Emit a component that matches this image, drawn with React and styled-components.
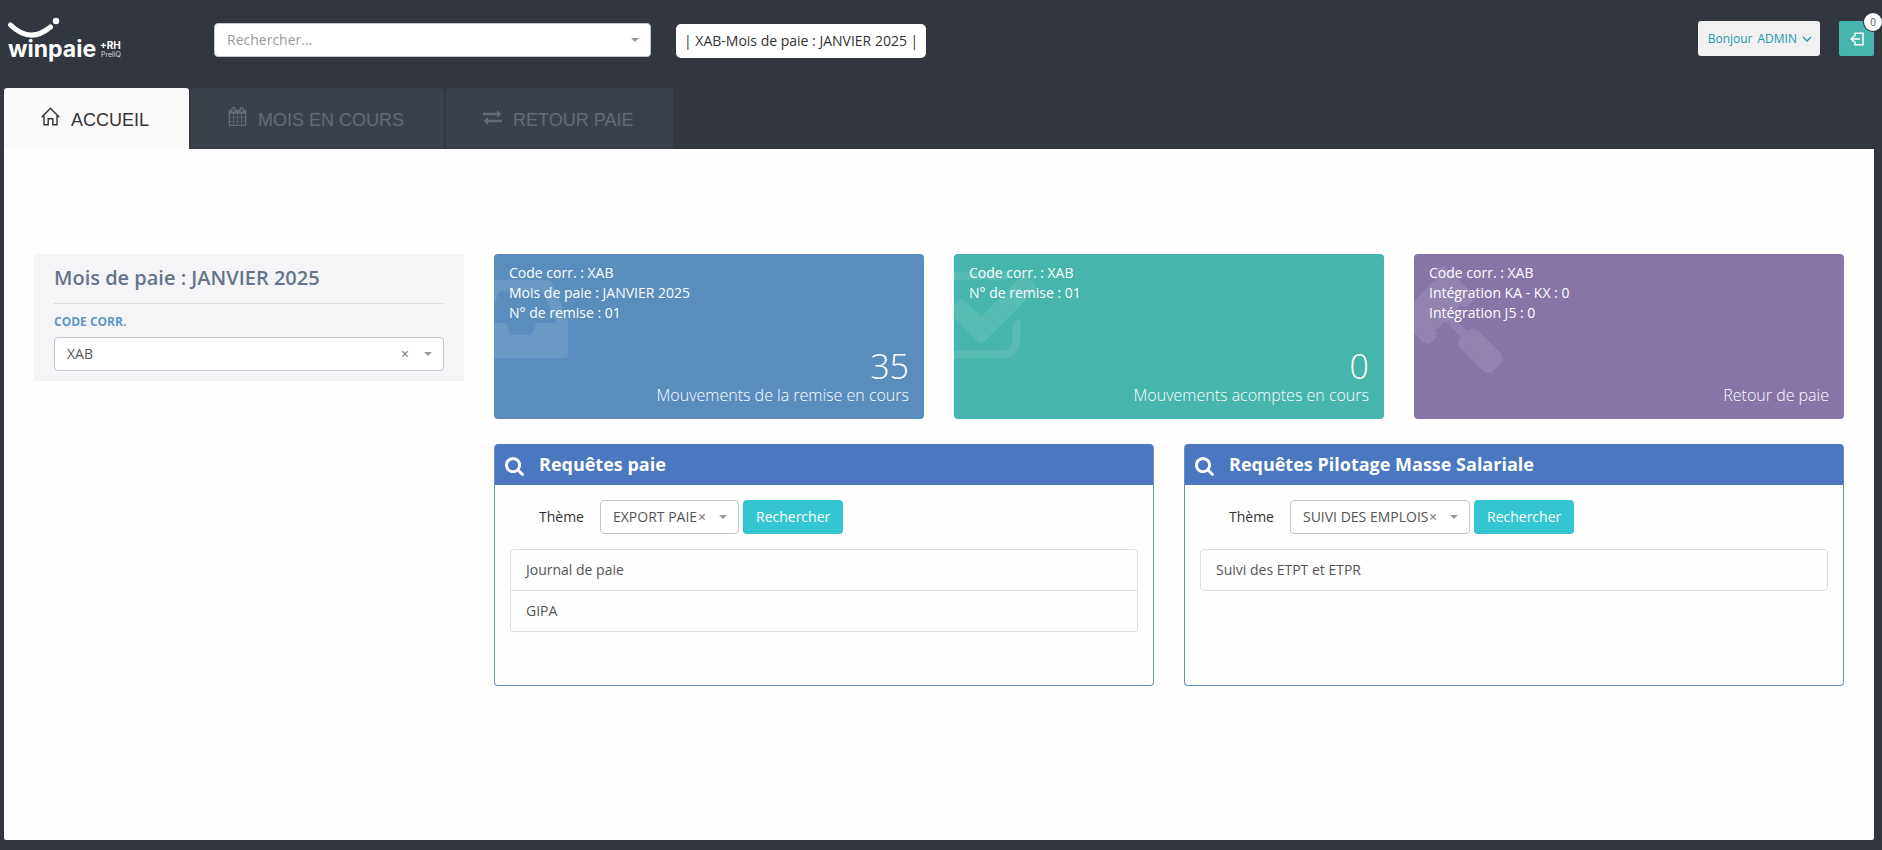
import React from 'react';
import styled, { createGlobalStyle } from 'styled-components';

const colors = {
  dark: '#32363f',
  tab: '#3b414b',
  tabText: '#656a73',
  panel: '#fefefe',
  side: '#f5f5f8',
  border: '#c2c5ce',
  line: '#dddde0',
  blue: '#5a8dbd',
  green: '#45b5ad',
  purple: '#8775a8',
  steel: '#4a77bf',
  cyan: '#33c6d0',
  text: '#333333',
  grey: '#555555',
};

const GlobalStyle = createGlobalStyle`
  * {
    box-sizing: border-box;
  }

  body {
    margin: 0;
    background: ${colors.dark};
    color: ${colors.text};
    font-family: 'Open Sans', sans-serif;
    font-size: 14px;
    line-height: 20px;
  }

  button,
  select {
    font: inherit;
  }
`;

const Page = styled.div`
  min-height: 100vh;
  display: flex;
  flex-direction: column;
  padding: 0 8px 10px 4px;
`;

const Header = styled.header`
  height: 88px;
  display: flex;
  align-items: flex-start;
  padding-top: 21px;
`;

const LogoLink = styled.a`
  flex: none;
  width: 210px;
  margin-top: -5px;
  padding-left: 3px;

  svg {
    display: block;
  }
`;

const SelectBox = styled.div`
  position: relative;
  flex: none;
  width: ${({ $width }) => $width || 'auto'};
  height: 34px;

  select {
    width: 100%;
    height: 34px;
    padding: 0 ${({ $compact }) => ($compact ? 40 : 48)}px 1px 12px;
    appearance: none;
    border: 1px solid ${colors.border};
    border-radius: 4px;
    background: #fff;
    color: ${({ $muted }) => ($muted ? '#999' : colors.grey)};
  }
`;

const Caret = styled.span`
  position: absolute;
  top: 15px;
  right: 12px;
  border: 4px solid transparent;
  border-top-color: #999;
  border-bottom: 0;
  pointer-events: none;
`;

const Clear = styled.button`
  position: absolute;
  top: 7px;
  right: ${({ $compact }) => ($compact ? 33 : 35)}px;
  padding: 0;
  border: 0;
  background: none;
  color: #888;
  font-size: 14px;
  font-weight: 600;
  line-height: 20px;
`;

const SearchArea = styled.div`
  margin-top: 2px;
`;

const Period = styled.div`
  margin: 3px 0 0 25px;
  padding: 7px 8px;
  border-radius: 5px;
  background: #fff;
  white-space: pre;
`;

const Actions = styled.div`
  display: flex;
  gap: 19px;
  margin-left: auto;
`;

const UserButton = styled.button`
  height: 35px;
  display: flex;
  align-items: center;
  gap: 5px;
  padding: 0 8px 0 10px;
  border: 0;
  border-radius: 3px;
  background: #f1f1f2;
  color: #2398a8;
  font-size: 12px;
`;

const ExitButton = styled.button`
  position: relative;
  width: 35px;
  height: 35px;
  padding: 0;
  border: 0;
  border-radius: 2px;
  background: ${colors.green};
  display: flex;
  align-items: center;
  justify-content: center;
`;

const Badge = styled.span`
  position: absolute;
  top: -8px;
  right: -8px;
  width: 18px;
  height: 18px;
  border-radius: 50%;
  background: #fff;
  box-shadow: 0 0 0 1px ${colors.dark};
  color: #555;
  font-size: 10px;
  line-height: 18px;
  text-align: center;
`;

const Tabs = styled.nav`
  display: flex;
  gap: 2px;
`;

const Tab = styled.a`
  height: 61px;
  display: flex;
  align-items: center;
  gap: 11px;
  padding: 2px 40px 0 37px;
  border-radius: 3px 3px 0 0;
  background: ${({ $active }) => ($active ? '#fafafa' : colors.tab)};
  color: ${({ $active }) => ($active ? colors.text : colors.tabText)};
  font-family: 'Liberation Sans', sans-serif;
  font-size: 18px;
  text-decoration: none;

  svg {
    margin-bottom: 6px;
  }
`;

const Panel = styled.main`
  flex: 1;
  display: grid;
  grid-template-columns: repeat(4, minmax(0, 1fr));
  align-items: start;
  gap: 30px;
  padding: 105px 30px 30px;
  border-radius: 0 0 2px 2px;
  background: ${colors.panel};
`;

const SideCard = styled.section`
  padding: 8px 20px 10px;
  background: ${colors.side};

  h2 {
    margin: 0 0 8px;
    padding-bottom: 10px;
    border-bottom: 1px solid ${colors.line};
    color: #65748a;
    font-size: 20px;
    font-weight: 600;
    line-height: 31px;
  }

  label {
    display: block;
    margin-bottom: 5px;
    color: #6297c4;
    font-size: 12px;
    font-weight: 700;
    text-transform: uppercase;
  }
`;

const Content = styled.div`
  grid-column: span 3;
  display: grid;
  gap: 25px;
`;

const Stats = styled.div`
  display: grid;
  grid-template-columns: repeat(3, minmax(0, 1fr));
  gap: 30px;
`;

const StatCard = styled.article`
  position: relative;
  overflow: hidden;
  min-height: 165px;
  display: flex;
  flex-direction: column;
  justify-content: space-between;
  padding: 9px 15px 13px;
  border-radius: 4px;
  background: ${({ $color }) => $color};
  color: #fff;

  > svg {
    position: absolute;
    top: 10px;
    left: -20px;
    fill: #fff;
    opacity: 0.1;
  }
`;

const StatLines = styled.div`
  position: relative;
`;

const StatTotal = styled.div`
  text-align: right;
  font-weight: 300;

  strong {
    display: block;
    font-size: 34px;
    font-weight: 300;
    line-height: 38px;
  }

  span {
    font-size: 16px;
  }
`;

const Queries = styled.div`
  display: grid;
  grid-template-columns: repeat(2, minmax(0, 1fr));
  gap: 30px;
`;

const QueryCard = styled.section`
  min-height: 242px;
  overflow: hidden;
  border: 1px solid #6b8fc0;
  border-top: 0;
  border-radius: 4px;
`;

const QueryTitle = styled.h3`
  height: 41px;
  display: flex;
  align-items: center;
  gap: 15px;
  margin: 0;
  padding: 0 10px;
  background: ${colors.steel};
  color: #fff;
  font-size: 18px;
  font-weight: 700;

  svg {
    margin-top: 4px;
    fill: #fff;
  }

  span {
    margin-bottom: 2px;
  }
`;

const QueryForm = styled.form`
  display: flex;
  align-items: center;
  padding: 15px 44px;

  label {
    margin-right: 16px;
  }
`;

const SearchButton = styled.button`
  height: 34px;
  margin-left: 4px;
  padding: 0 13px 1px;
  border: 0;
  border-radius: 4px;
  background: ${colors.cyan};
  color: #fff;
`;

const ResultList = styled.ul`
  margin: 0 15px;
  padding: 0;
  list-style: none;
  border: 1px solid ${colors.line};
  border-radius: 4px;

  li + li {
    border-top: 1px solid ${colors.line};
  }

  a {
    display: block;
    padding: 10px 15px;
    color: ${colors.grey};
    text-decoration: none;
  }
`;

const Logo = () => (
  <svg width="118" height="50" viewBox="0 0 118 50" fill="#fff">
    <path
      d="M3.500 9Q23 28 43.500 11"
      fill="none"
      stroke="#fff"
      strokeWidth="5"
      strokeLinecap="round"
    />
    <circle cx="49" cy="5" r="3.200" />
    <text x="1" y="41" fontFamily="Inter" fontWeight="700" fontSize="23">
      winpaie
    </text>
    <text x="93" y="33" fontFamily="Inter" fontWeight="700" fontSize="10">
      +RH
    </text>
    <text x="94" y="41" fontFamily="Inter" fontSize="7" opacity="0.8">
      PreliQ
    </text>
  </svg>
);

const HomeIcon = () => (
  <svg
    width="19"
    height="19"
    viewBox="0 0 19 19"
    fill="none"
    stroke="currentColor"
    strokeWidth="1.4"
  >
    <path d="M.7 10.200 9.500 1.200l8.800 9M3 8.500v9.200h4.200v-6h4.600v6H16V8.500" />
  </svg>
);

const CalendarIcon = () => (
  <svg width="19" height="19" viewBox="0 0 1664 1792" fill="currentColor">
    <path d="M128 1664h288v-288h-288v288zm352 0h320v-288h-320v288zm-352-352h288v-320h-288v320zm352 0h320v-320h-320v320zm-352-384h288v-288h-288v288zm736 736h320v-288h-320v288zm-384-736h320v-288h-320v288zm768 736h288v-288h-288v288zm-384-352h320v-320h-320v320zm-352-864v-288q0-13-9.500-22.500t-22.500-9.500h-64q-13 0-22.500 9.500t-9.500 22.500v288q0 13 9.500 22.500t22.500 9.500h64q13 0 22.500-9.500t9.500-22.500zm736 864h288v-320h-288v320zm-384-384h320v-288h-320v288zm384 0h288v-288h-288v288zm32-480v-288q0-13-9.500-22.500t-22.500-9.500h-64q-13 0-22.500 9.500t-9.500 22.500v288q0 13 9.500 22.500t22.500 9.500h64q13 0 22.500-9.500t9.500-22.500zm384-64v1280q0 52-38 90t-90 38h-1408q-52 0-90-38t-38-90v-1280q0-52 38-90t90-38h128v-96q0-66 47-113t113-47h64q66 0 113 47t47 113v96h384v-96q0-66 47-113t113-47h64q66 0 113 47t47 113v96h128q52 0 90 38t38 90z" />
  </svg>
);

const ExchangeIcon = () => (
  <svg
    width="19"
    height="19"
    viewBox="0 0 19 19"
    fill="none"
    stroke="currentColor"
    strokeWidth="2.400"
  >
    <path d="M0 7h16M19 14H3" />
    <path
      d="M14 3l4.500 4-4.500 4zM5 10l-4.500 4 4.500 4z"
      fill="currentColor"
      stroke="none"
    />
  </svg>
);

const ExitIcon = () => (
  <svg
    width="14"
    height="14"
    viewBox="0 0 14 14"
    fill="none"
    stroke="#fff"
    strokeWidth="1.5"
  >
    <path d="M5 4.500V1.200h8v11.600H5V9.500M10 7H1.200M4 4.200 1.200 7 4 9.800" />
  </svg>
);

const ChevronIcon = () => (
  <svg
    width="10"
    height="6"
    viewBox="0 0 10 6"
    fill="none"
    stroke="currentColor"
    strokeWidth="1.4"
  >
    <path d="M1 1l4 4 4-4" />
  </svg>
);

const SearchIcon = () => (
  <svg width="19" height="19" viewBox="0 128 1664 1664">
    <path d="M1152 832q0-185-131.500-316.500t-316.500-131.500-316.500 131.500-131.500 316.500 131.500 316.500 316.500 131.500 316.500-131.500 131.500-316.500zm512 832q0 52-38 90t-90 38q-54 0-90-38l-343-342q-179 124-399 124-143 0-273.500-55.500t-225-150-150-225-55.500-273.500 55.500-273.500 150-225 225-150 273.500-55.500 273.500 55.500 225 150 150 225 55.500 273.500q0 220-124 399l343 343q37 37 37 90z" />
  </svg>
);

const statIcons = {
  inbox:
    'M1023 960h316q-1-3-2.500-8t-2.500-8l-212-496h-708l-212 496q-1 2-2.500 8t-2.500 8h316l95 192h320zm513 30v482q0 26-19 45t-45 19h-1408q-26 0-45-19t-19-45v-482q0-62 25-123l238-552q10-25 36.500-42t52.500-17h832q26 0 52.500 17t36.500 42l238 552q25 61 25 123z',
  check:
    'M1408 930v318q0 119-84.500 203.500t-203.500 84.500h-832q-119 0-203.500-84.500t-84.500-203.500v-832q0-119 84.500-203.500t203.500-84.500h832q63 0 117 25 15 7 18 23 3 17-9 29l-49 49q-10 10-23 10-3 0-9-2-23-6-45-6h-832q-66 0-113 47t-47 113v832q0 66 47 113t113 47h832q66 0 113-47t47-113v-254q0-13 9-22l64-64q10-10 23-10 6 0 12 3 20 8 20 29zm231-489l-814 814q-24 24-57 24t-57-24l-430-430q-24-24-24-57t24-57l110-110q24-24 57-24t57 24l263 263 647-647q24-24 57-24t57 24l110 110q24 24 24 57t-24 57z',
  gavel:
    'M1771 1536q0 53-37 90l-107 108q-39 37-91 37-53 0-90-37l-363-364q-38-36-38-90 0-53 43-96l-256-256-126 126q-14 14-34 14t-34-14q2 2 12.500 12t12.500 13 10 11.500 10 13.500 6 13.500 5.500 16.500 1.500 18q0 38-28 68-3 3-16.500 18t-19 20.500-18.500 16.500-22 15.500-22 9-26 4.500q-40 0-68-28l-408-408q-28-28-28-68 0-13 4.500-26t9-22 15.500-22 16.500-18.500 20.500-19 18-16.500q30-28 68-28 10 0 18 1.500t16.500 5.500 13.500 6 13.500 10 11.500 10 13 12.500 12 12.500q-14-14-14-34t14-34l348-348q14-14 34-14t34 14q-2-2-12.500-12t-12.500-13-10-11.500-10-13.500-6-13.500-5.500-16.500-1.500-18q0-38 28-68 3-3 16.500-18t19-20.500 18.500-16.500 22-15.500 22-9 26-4.500q40 0 68 28l408 408q28 28 28 68 0 13-4.500 26t-9 22-15.500 22-16.500 18.500-20.500 19-18 16.500q-30 28-68 28-10 0-18-1.500t-16.500-5.500-13.500-6-13.500-10-11.500-10-13-12.500-12-12.500q14 14 14 34t-14 34l-126 126 256 256q43-43 96-43 52 0 91 37l363 363q37 39 37 91z',
};

const tabs = [
  { label: 'ACCUEIL', Icon: HomeIcon, active: true },
  { label: 'MOIS EN COURS', Icon: CalendarIcon },
  { label: 'RETOUR PAIE', Icon: ExchangeIcon },
];

const stats = [
  {
    color: colors.blue,
    icon: 'inbox',
    lines: ['Code corr. : XAB', 'Mois de paie : JANVIER 2025', 'N° de remise : 01'],
    total: '35',
    label: 'Mouvements de la remise en cours',
  },
  {
    color: colors.green,
    icon: 'check',
    lines: ['Code corr. : XAB', 'N° de remise : 01'],
    total: '0',
    label: 'Mouvements acomptes en cours',
  },
  {
    color: colors.purple,
    icon: 'gavel',
    lines: ['Code corr. : XAB', 'Intégration KA - KX : 0', 'Intégration J5 : 0'],
    label: 'Retour de paie',
  },
];

const queries = [
  {
    id: 'theme-paie',
    title: 'Requêtes paie',
    theme: 'EXPORT PAIE',
    results: ['Journal de paie', 'GIPA'],
  },
  {
    id: 'theme-pilotage',
    title: 'Requêtes Pilotage Masse Salariale',
    theme: 'SUIVI DES EMPLOIS',
    results: ['Suivi des ETPT et ETPR'],
  },
];

const Select = ({ id, value, width, muted, compact, clearable, label }) => (
  <SelectBox $width={width} $muted={muted} $compact={compact}>
    <select id={id} aria-label={label}>
      <option>{value}</option>
    </select>
    {clearable && (
      <Clear type="button" $compact={compact}>
        ×
      </Clear>
    )}
    <Caret />
  </SelectBox>
);

const Stat = ({ color, icon, lines, total, label }) => (
  <StatCard $color={color}>
    <svg width="110" height="110" viewBox="0 0 1792 1792">
      <path d={statIcons[icon]} />
    </svg>
    <StatLines>
      {lines.map((line) => (
        <div key={line}>{line}</div>
      ))}
    </StatLines>
    <StatTotal>
      {total && <strong>{total}</strong>}
      <span>{label}</span>
    </StatTotal>
  </StatCard>
);

const Query = ({ id, title, theme, results }) => (
  <QueryCard>
    <QueryTitle>
      <SearchIcon />
      <span>{title}</span>
    </QueryTitle>
    <QueryForm>
      <label htmlFor={id}>Thème</label>
      <Select id={id} value={theme} compact clearable />
      <SearchButton type="button">Rechercher</SearchButton>
    </QueryForm>
    <ResultList>
      {results.map((result) => (
        <li key={result}>
          <a href="#">{result}</a>
        </li>
      ))}
    </ResultList>
  </QueryCard>
);

const App = () => (
  <>
    <GlobalStyle />
    <Page>
      <Header>
        <LogoLink href="#">
          <Logo />
        </LogoLink>
        <SearchArea>
          <Select value="Rechercher..." width="437px" label="Rechercher" muted />
        </SearchArea>
        <Period>| XAB-Mois de paie : JANVIER 2025 |</Period>
        <Actions>
          <UserButton type="button">
            <span>Bonjour</span>
            <span>ADMIN</span>
            <ChevronIcon />
          </UserButton>
          <ExitButton type="button">
            <ExitIcon />
            <Badge>0</Badge>
          </ExitButton>
        </Actions>
      </Header>
      <Tabs>
        {tabs.map(({ label, Icon, active }) => (
          <Tab key={label} href="#" $active={active}>
            <Icon />
            {label}
          </Tab>
        ))}
      </Tabs>
      <Panel>
        <SideCard>
          <h2>Mois de paie : JANVIER 2025</h2>
          <label htmlFor="code-corr">Code corr.</label>
          <Select id="code-corr" value="XAB" width="100%" clearable />
        </SideCard>
        <Content>
          <Stats>
            {stats.map((stat) => (
              <Stat key={stat.label} {...stat} />
            ))}
          </Stats>
          <Queries>
            {queries.map((query) => (
              <Query key={query.id} {...query} />
            ))}
          </Queries>
        </Content>
      </Panel>
    </Page>
  </>
);

export default App;
